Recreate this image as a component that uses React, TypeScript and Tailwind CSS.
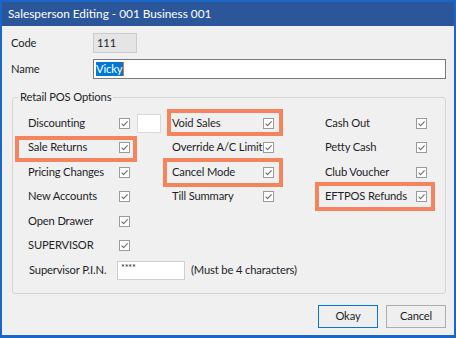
import React from "react";

const Check = () => (
  <span className="flex h-[11px] w-[11px] shrink-0 items-center justify-center border border-[#9a9a9a] bg-white">
    <svg width="9" height="9" viewBox="0 0 9 9">
      <path d="M1.6 4.6 L3.6 6.6 L7.6 2.4" fill="none" stroke="#707070" strokeWidth="1.1" />
    </svg>
  </span>
);

type CellProps = {
  label: string;
  hl?: string;
  extra?: React.ReactNode;
};

const Cell = ({ label, hl, extra }: CellProps) => (
  <div className="relative flex items-center">
    <span className="w-[91px] shrink-0 whitespace-nowrap">{label}</span>
    <Check />
    {extra}
    {hl && <span className={"pointer-events-none absolute border-4 border-[#f3845e] " + hl} />}
  </div>
);

export default function App() {
  return (
    <div className="flex h-[338px] w-[456px] flex-col overflow-hidden border-b-[3px] border-l-2 border-r-2 border-t-2 border-[#1a66c9] bg-[#f0f0f0] font-['Lato',sans-serif] text-[11.2px] tracking-[-0.15px] text-[#1e1e28]">
      <div className="flex h-[24px] shrink-0 items-center bg-[#2b579a] pl-[6px] text-[11.8px] tracking-normal text-white">
        Salesperson Editing - 001 Business 001
      </div>
      <div className="flex flex-col pt-[7px]">
        <div className="flex items-center pl-[9px]">
          <span className="w-[82px]">Code</span>
          <div className="flex h-[20px] w-[44px] items-center border border-[#cccccc] bg-[#e5e5e5] pl-[3px]">111</div>
        </div>
        <div className="mt-[6px] flex items-center pl-[9px]">
          <span className="w-[82px]">Name</span>
          <div className="flex h-[20px] w-[353px] items-center border border-[#7a7a7a] bg-white pl-[2px]">
            <span className="bg-[#0078d7] pr-[1px] leading-[14px] text-white">Vicky</span>
            <span className="h-[14px] w-[1px] bg-[#f07020]" />
          </div>
        </div>
        <fieldset className="ml-[10px] mr-[8px] mt-[10px] rounded-[3px] border border-[#d5d5d5]">
          <legend className="ml-[5px] px-[2px] leading-[16px]">Retail POS Options</legend>
          <div className="grid auto-rows-[24.5px] grid-cols-[144px_153px_120px] pb-[10px] pl-[15px] pt-[6px]">
            <Cell
              label="Discounting"
              extra={<span className="ml-[7px] h-[19px] w-[24px] border border-[#d9d9d9] bg-white" />}
            />
            <Cell label="Void Sales" hl="left-[-5px] top-[-2px] h-[27px] w-[116px]" />
            <Cell label="Cash Out" />
            <Cell label="Sale Returns" hl="left-[-13px] top-0 h-[26px] w-[122px]" />
            <Cell label="Override A/C Limit" />
            <Cell label="Petty Cash" />
            <Cell label="Pricing Changes" />
            <Cell label="Cancel Mode" hl="left-[-9px] top-[-2px] h-[29px] w-[120px]" />
            <Cell label="Club Voucher" />
            <Cell label="New Accounts" />
            <Cell label="Till Summary" />
            <Cell label="EFTPOS Refunds" hl="left-[-10px] top-[-3px] h-[29px] w-[120px]" />
            <Cell label="Open Drawer" />
            <div />
            <div />
            <Cell label="SUPERVISOR" />
            <div />
            <div />
            <div className="col-span-3 flex items-center pl-[1px]">
              <span className="w-[88px] whitespace-nowrap">Supervisor P.I.N.</span>
              <div className="h-[19px] w-[68px] border border-[#cfcfcf] bg-white pl-[3px] pt-[1px] text-[9px] leading-[10px]">
                ****
              </div>
              <span className="ml-[6px]">(Must be 4 characters)</span>
            </div>
          </div>
        </fieldset>
        <div className="mt-[11px] flex justify-end gap-[8px] pr-[8px]">
          <button className="flex h-[23px] w-[60px] items-center justify-center border border-[#0078d7] bg-[#efefef]">
            Okay
          </button>
          <button className="flex h-[23px] w-[60px] items-center justify-center border border-[#adadad] bg-[#efefef]">
            Cancel
          </button>
        </div>
      </div>
    </div>
  );
}
